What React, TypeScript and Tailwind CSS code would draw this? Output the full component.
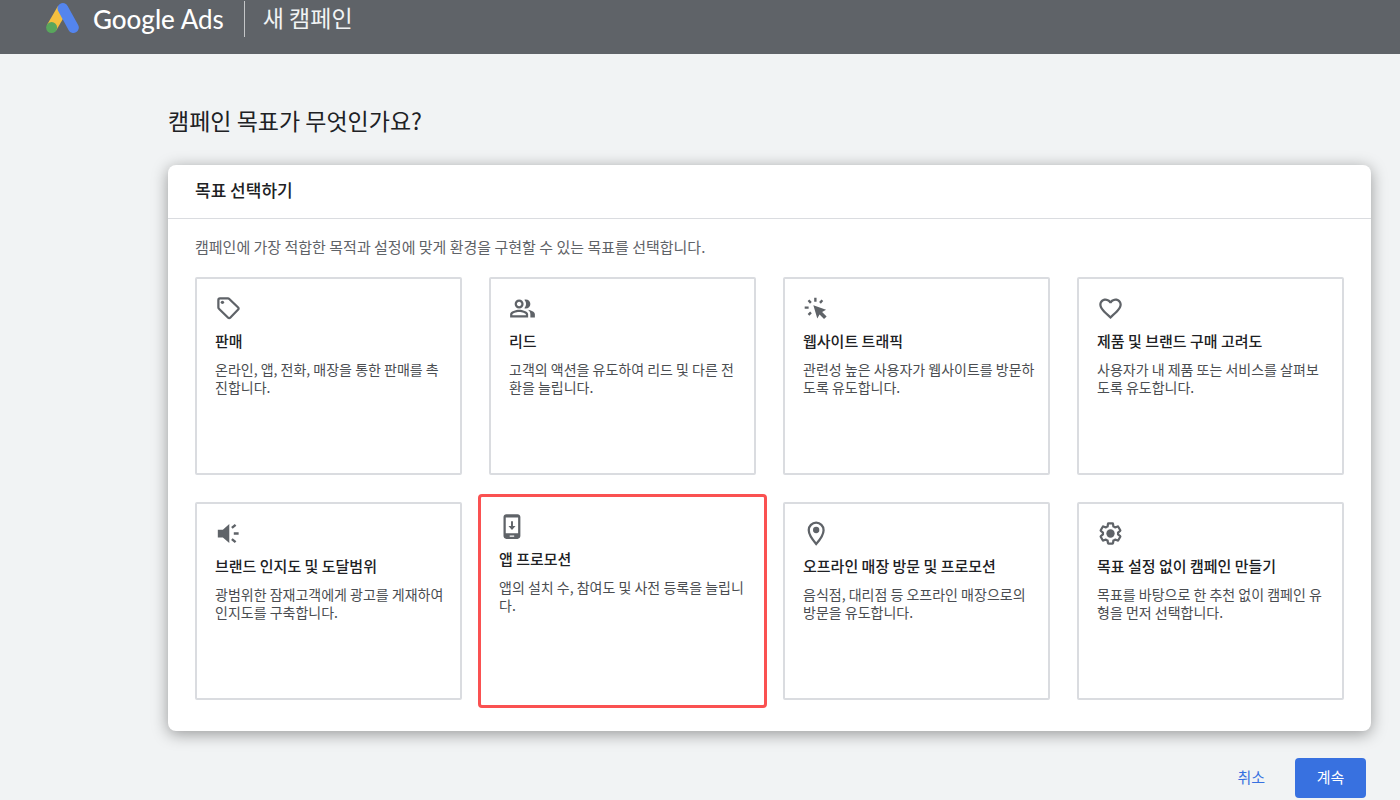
import { ReactNode, useState } from "react";
import { MdFavoriteBorder, MdOutlinePeopleAlt } from "react-icons/md";

// TYPES
type Goal = {
    id: string;
    title: string;
    description: string;
    icon: ReactNode;
};

// ICONS
const iconClass = "w-[27px] h-[27px] shrink-0 text-[#5f6368]";

const AdsLogo = () => (
    <svg viewBox="0 0 33 31" className="w-[33px] h-[31px] shrink-0" fill="none" aria-hidden="true">
        <path d="M16.6 5.7 5.6 24.6" stroke="#f4bf3f" strokeWidth="10.8" />
        <path d="M16.9 5.5 27.4 24.6" stroke="#5485ee" strokeWidth="10.8" strokeLinecap="round" />
        <circle cx="5.6" cy="24.6" r="5.5" fill="#58a65c" />
    </svg>
);

const TagIcon = () => (
    <svg viewBox="0 0 24 24" className={iconClass} fill="none" aria-hidden="true">
        <path
            d="M3 4.4C3 3.6 3.6 3 4.4 3h7.1c.5 0 .9.2 1.2.5l7.9 7.6c.5.5.5 1.3 0 1.8l-7.1 7.3c-.5.5-1.3.5-1.8 0l-8-7.8c-.4-.3-.7-.8-.7-1.3z"
            stroke="currentColor"
            strokeWidth="2"
            strokeLinejoin="round"
        />
        <circle cx="6.6" cy="6.5" r="1.5" fill="currentColor" />
    </svg>
);

const ClickIcon = () => (
    <svg viewBox="0 0 24 24" className={iconClass} fill="none" aria-hidden="true">
        <path
            d="M11 2.500v3.500M4.900 4.700l2.100 2.300M17.200 4.700l-2.100 2.300M1.500 11.200h3.500M4.900 17.700l2.200-2.300"
            stroke="currentColor"
            strokeWidth="2.100"
        />
        <path d="m9.200 9 11.300 4-3.500 2 4 4-2.300 2.300-4-4-2 3.500z" fill="currentColor" />
    </svg>
);

const SpeakerIcon = () => (
    <svg viewBox="0 0 24 24" className={iconClass} fill="none" aria-hidden="true">
        <path d="M2.500 8.700H7L12.700 3.500v17L7 15.500H2.500z" fill="currentColor" />
        <path d="m15 7 3.300-2.700M16.700 12H21M15 17l3.300 2.700" stroke="currentColor" strokeWidth="2.200" />
    </svg>
);

const PhoneIcon = () => (
    <svg viewBox="0 0 24 24" className={iconClass} aria-hidden="true">
        <path
            fill="currentColor"
            fillRule="evenodd"
            d="M6.500 1h10c1.400 0 2.500 1.100 2.500 2.500v17c0 1.400-1.100 2.500-2.500 2.500h-10C5.100 23 4 21.900 4 20.500v-17C4 2.100 5.100 1 6.500 1zM6 4v14h11V4zm3.500 15.900v1.200h4v-1.200z"
        />
        <path fill="currentColor" d="M10.700 7.300h1.700v4.300h2.300l-3.150 3.500-3.150-3.500h2.300z" />
    </svg>
);

const PinIcon = () => (
    <svg viewBox="0 0 24 24" className={iconClass} fill="none" aria-hidden="true">
        <path
            d="M11.700 21.300C7.900 17 5.100 12.800 5.100 9a6.600 6.600 0 0 1 13.200 0c0 3.800-2.800 8-6.600 12.300z"
            stroke="currentColor"
            strokeWidth="2"
        />
        <circle cx="11.700" cy="8.900" r="2.800" fill="currentColor" />
    </svg>
);

const GearIcon = () => (
    <svg viewBox="0 0 24 24" className={iconClass} fill="none" aria-hidden="true">
        <path
            transform="translate(1.200 1.200) scale(0.9)"
            d="M19.430 12.980c.04-.32.07-.64.07-.98s-.03-.66-.07-.98l2.110-1.650c.19-.15.24-.42.12-.64l-2-3.460c-.12-.22-.39-.3-.61-.22l-2.490 1c-.52-.4-1.080-.73-1.690-.98l-.38-2.650C14.460 2.180 14.250 2 14 2h-4c-.25 0-.46.18-.49.42l-.38 2.650c-.61.25-1.170.59-1.690.98l-2.490-1c-.23-.09-.49 0-.61.22l-2 3.460c-.13.22-.07.49.12.64l2.110 1.650c-.04.32-.07.65-.07.98s.03.66.07.98l-2.110 1.650c-.19.15-.24.42-.12.64l2 3.460c.12.22.39.3.61.22l2.490-1c.52.4 1.080.73 1.690.98l.38 2.650c.03.24.24.42.49.42h4c.25 0 .46-.18.49-.42l.38-2.650c.61-.25 1.170-.59 1.690-.98l2.490 1c.23.09.49 0 .61-.22l2-3.460c.12-.22.07-.49-.12-.64z"
            stroke="currentColor"
            strokeWidth="2.200"
            strokeLinejoin="round"
        />
        <circle cx="12" cy="12" r="3.700" fill="currentColor" />
    </svg>
);

const goals: Goal[] = [
    {
        id: "sales",
        title: "판매",
        description: "온라인, 앱, 전화, 매장을 통한 판매를 촉진합니다.",
        icon: <TagIcon />,
    },
    {
        id: "leads",
        title: "리드",
        description: "고객의 액션을 유도하여 리드 및 다른 전환을 늘립니다.",
        icon: <MdOutlinePeopleAlt className={iconClass} />,
    },
    {
        id: "traffic",
        title: "웹사이트 트래픽",
        description: "관련성 높은 사용자가 웹사이트를 방문하도록 유도합니다.",
        icon: <ClickIcon />,
    },
    {
        id: "consideration",
        title: "제품 및 브랜드 구매 고려도",
        description: "사용자가 내 제품 또는 서비스를 살펴보도록 유도합니다.",
        icon: <MdFavoriteBorder className={iconClass} />,
    },
    {
        id: "awareness",
        title: "브랜드 인지도 및 도달범위",
        description: "광범위한 잠재고객에게 광고를 게재하여 인지도를 구축합니다.",
        icon: <SpeakerIcon />,
    },
    {
        id: "app",
        title: "앱 프로모션",
        description: "앱의 설치 수, 참여도 및 사전 등록을 늘립니다.",
        icon: <PhoneIcon />,
    },
    {
        id: "store",
        title: "오프라인 매장 방문 및 프로모션",
        description: "음식점, 대리점 등 오프라인 매장으로의 방문을 유도합니다.",
        icon: <PinIcon />,
    },
    {
        id: "none",
        title: "목표 설정 없이 캠페인 만들기",
        description: "목표를 바탕으로 한 추천 없이 캠페인 유형을 먼저 선택합니다.",
        icon: <GearIcon />,
    },
];

const App = () => {
    const [selected, setSelected] = useState("app");

    return (
        <div className="min-h-screen bg-[#f1f3f4] font-['Noto_Sans_CJK_KR',sans-serif] text-[#202124]">
            <header className="flex items-center h-[54px] pl-[46px] pb-[17px] bg-[#5f6368] text-white">
                <AdsLogo />
                <div className="ml-[14px] font-[Lato,sans-serif] text-[26px] leading-9">
                    <span className="font-medium">Google</span> Ads
                </div>
                <div className="w-px h-9 ml-5 bg-[#c4c6c8]" />
                <div className="ml-[18px] pb-1 text-[23px] leading-8 text-[#f1f3f4]">새 캠페인</div>
            </header>

            <main className="pl-[168px] pr-[29px] pt-12">
                <h1 className="text-[23px] leading-9">캠페인 목표가 무엇인가요?</h1>

                <section className="mt-[27px] rounded-lg bg-white shadow-[0_3px_16px_rgba(0,0,0,0.38)]">
                    <h2 className="px-[27px] pt-[13px] pb-4 border-b border-[#dadce0] text-[17px] leading-6 font-medium">
                        목표 선택하기
                    </h2>
                    <div className="px-[27px] pt-4 pb-[31px]">
                        <p className="text-[15px] leading-6 text-[#5f6368]">
                            캠페인에 가장 적합한 목적과 설정에 맞게 환경을 구현할 수 있는 목표를 선택합니다.
                        </p>
                        <div className="grid grid-cols-4 auto-rows-[198px] gap-[27px] mt-[18px]">
                            {goals.map((goal) => (
                                <button
                                    key={goal.id}
                                    type="button"
                                    aria-pressed={selected === goal.id}
                                    onClick={() => setSelected(goal.id)}
                                    className={`flex flex-col items-start justify-start gap-[9px] pl-[18px] pr-3 pt-4 bg-white text-left cursor-pointer ${
                                        selected === goal.id
                                            ? "-mx-[11px] -my-2 border-3 border-[#fa5151] rounded"
                                            : "border-2 border-[#dadce0] rounded-xs"
                                    }`}
                                >
                                    {goal.icon}
                                    <span className="text-[15px] leading-5 font-medium">{goal.title}</span>
                                    <span className="text-[14px] leading-[18px] text-[#4a4d51]">
                                        {goal.description}
                                    </span>
                                </button>
                            ))}
                        </div>
                    </div>
                </section>

                <div className="flex justify-end items-center gap-[10px] mt-[27px] pr-[5px] text-[15px] leading-5">
                    <button type="button" className="h-10 px-5 pb-0.5 text-[#3871e0] cursor-pointer">
                        취소
                    </button>
                    <button type="button" className="h-10 w-[71px] pb-0.5 rounded bg-[#3871e0] text-white cursor-pointer">
                        계속
                    </button>
                </div>
            </main>
        </div>
    );
};

export default App;
